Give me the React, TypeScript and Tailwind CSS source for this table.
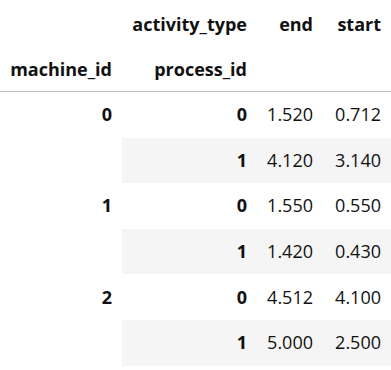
import React from "react";

const rows: { m: string; p: string; end: string; start: string }[] = [
  { m: "0", p: "0", end: "1.520", start: "0.712" },
  { m: "", p: "1", end: "4.120", start: "3.140" },
  { m: "1", p: "0", end: "1.550", start: "0.550" },
  { m: "", p: "1", end: "1.420", start: "0.430" },
  { m: "2", p: "0", end: "4.512", start: "4.100" },
  { m: "", p: "1", end: "5.000", start: "2.500" },
];

export default function App() {
  return (
    <div
      className="w-[391px] h-[370px] bg-white text-[18px] text-[#111]"
      style={{ fontFamily: '"Open Sans", "Noto Sans", sans-serif' }}
    >
      <div className="grid grid-cols-[122px_135px_66px_68px]">
        {/* header row 1 */}
        <div className="h-[48px]" />
        <div className="h-[48px] flex items-center justify-end pr-[10px] font-bold">activity_type</div>
        <div className="h-[48px] flex items-center justify-end pr-[10px] font-bold">end</div>
        <div className="h-[48px] flex items-center justify-end pr-[10px] font-bold">start</div>
        {/* header row 2 */}
        <div className="h-[44px] flex items-center justify-end pr-[10px] font-bold border-b border-[#bdbdbd]">machine_id</div>
        <div className="h-[44px] flex items-center justify-end pr-[10px] font-bold border-b border-[#bdbdbd]">process_id</div>
        <div className="h-[44px] border-b border-[#bdbdbd]" />
        <div className="h-[44px] border-b border-[#bdbdbd]" />
        {rows.map((r, i) => {
          const bg = i % 2 === 1 ? "bg-[#f5f5f5]" : "bg-white";
          return (
            <React.Fragment key={i}>
              <div className="h-[45.6px] flex items-center justify-end pr-[10px] font-bold bg-white">{r.m}</div>
              <div className={`h-[45.6px] flex items-center justify-end pr-[10px] font-bold ${bg}`}>{r.p}</div>
              <div className={`h-[45.6px] flex items-center justify-end pr-[10px] ${bg}`}>{r.end}</div>
              <div className={`h-[45.6px] flex items-center justify-end pr-[10px] ${bg}`}>{r.start}</div>
            </React.Fragment>
          );
        })}
      </div>
    </div>
  );
}
